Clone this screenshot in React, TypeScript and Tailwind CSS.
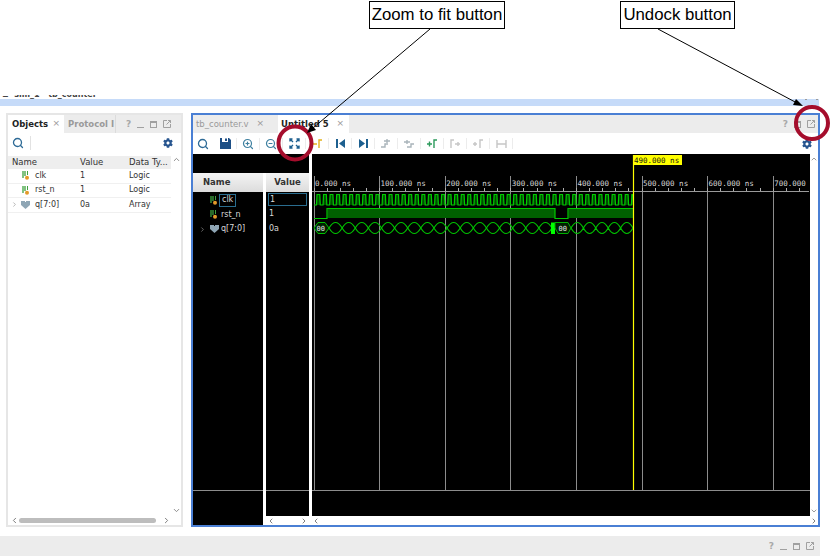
import { Search, ZoomIn, ZoomOut, ChevronLeft, ChevronRight, ChevronUp, ChevronDown } from "lucide-react"
import { FaCog } from "react-icons/fa"

const UI = "font-['DejaVu_Sans',sans-serif]"

const objects = [
  { name: "clk", value: "1", type: "Logic" },
  { name: "rst_n", value: "1", type: "Logic" },
  { name: "q[7:0]", value: "0a", type: "Array", bus: true },
]

const SignalIcon = () => (
  <svg width="8" height="9" viewBox="0 0 8 9" className="shrink-0">
    <path d="M1 0v7M3 0v5" stroke="#3fa23f" strokeWidth="1.300" />
    <path d="M5.500 0v4" stroke="#3fa23f" strokeWidth="1" />
    <circle cx="5" cy="6.800" r="2" fill="#e39a2a" />
  </svg>
)

const BusIcon = () => (
  <svg width="9" height="8" viewBox="0 0 9 8" className="shrink-0">
    <path d="M0 0h4v1h1V0h4v4L4.500 8 0 4z" fill="#8fa6b5" />
  </svg>
)

const QuestionMark = () => <span className={`${UI} text-[9px] font-bold leading-none text-[#a8a8a8]`}>?</span>

const WindowButtons = ({ gap, noMinimize }: { gap: string; noMinimize?: boolean }) => (
  <div className={`flex items-center ${gap}`}>
    <QuestionMark />
    {!noMinimize && <span className="mt-[6px] h-px w-[7px] bg-[#a0a0a0]" />}
    <span className="h-[7px] w-[7px] border border-[#a0a0a0] border-t-2" />
    <svg width="8" height="8" viewBox="0 0 8 8" fill="none" stroke="#a0a0a0">
      <path d="M4 .5H.5v7h7V4" />
      <path d="M3.500 4.500 7.500.5M5 .5h2.500V3" />
    </svg>
  </div>
)

const Divider = () => <span className="h-[14px] w-px bg-[#e2e2e2]" />

const ToolIcon = ({ d, color, fill }: { d: string; color: string; fill?: boolean }) => (
  <svg width="11" height="11" viewBox="0 0 11 11" fill={fill ? color : "none"} stroke={fill ? "none" : color} strokeWidth="1.400">
    <path d={d} />
  </svg>
)

const toolbar = [
  <Search key="find" size={12} strokeWidth={2.6} color="#2d6a96" />,
  <ToolIcon key="save" fill color="#1d4f86" d="M0 0h2v4h6V0h1l2 2v9H0zM5 .5h2V3H5z" />,
  <ZoomIn key="in" size={12} strokeWidth={2.4} color="#3d7f9f" />,
  <ZoomOut key="out" size={12} strokeWidth={2.4} color="#3d7f9f" />,
  <ToolIcon key="fit" color="#1d5f8f" d="M1 1l3 3M1 3.500V1h2.500M10 1 7 4M10 3.500V1H7.500M1 10l3-3M1 7.500V10h2.500M10 10 7 7M10 7.500V10H7.500" />,
  <ToolIcon key="cursor" color="#e3b21c" d="M0 6h5M7 10V2h3" />,
  <ToolIcon key="first" fill color="#1d5f8f" d="M1 1h2v9H1zM10 1v9L4 5.500z" />,
  <ToolIcon key="last" fill color="#1d5f8f" d="M8 1h2v9H8zM1 1v9l6-4.500z" />,
  <ToolIcon key="prev" color="#a9b4ba" d="M0 9h4V6h3M3 3h6M6 1v4" />,
  <ToolIcon key="next" color="#a9b4ba" d="M0 4h6M3 2v4M3 9h4V6h3" />,
  <ToolIcon key="marker" color="#2b9a5b" d="M0 6h5M2.500 3.500v5M7 10V2h3" />,
  <ToolIcon key="g1" color="#c6c6c6" d="M1 10V2h3M5 6h5M8 4v4" />,
  <ToolIcon key="g2" color="#c6c6c6" d="M0 6h4M2 4v4M7 10V2h3" />,
  <ToolIcon key="g3" color="#c6c6c6" d="M1 2v8M10 2v8M1 6h9" />,
]

const MAJOR = 65.6
const T0 = 313.5
const END = 633
const labels = ["0.000 ns", "100.000 ns", "200.000 ns", "300.000 ns", "400.000 ns", "500.000 ns", "600.000 ns", "700.000 ns"]

const clkPath = () => {
  let d = "M314 205"
  for (let x = 316.5; x < END; x += 6.56) {
    const fall = Math.min(x + 3.28, END)
    const rise = Math.min(x + 6.56, END)
    d += `L${x} 205L${x + 0.5} 194.500L${fall} 194.500L${fall + 0.5} 205L${rise} 205`
  }
  return d
}

// two arcs in antiphase, they cross at every value change
const busPath = (from: number, to: number) => {
  const count = Math.round((to - from) / 13.12)
  const w = (to - from) / count
  let a = `M${from} 228`
  let b = `M${from} 228`
  for (let i = 0; i < count; i++) {
    const x = from + i * w
    const up = i % 2 === 0
    a += `Q${x + w / 2} ${up ? 217 : 239} ${x + w} 228`
    b += `Q${x + w / 2} ${up ? 239 : 217} ${x + w} 228`
  }
  return `${a} ${b}`
}

const WaveSvg = () => {
  const ticks: number[] = []
  for (let x = T0; x < 810; x += MAJOR / 5) ticks.push(x)
  return (
    <svg width="498" height="362" viewBox="312 154 498 362" className="block">
      {labels.map((label, i) => {
        const x = T0 + i * MAJOR
        return (
          <g key={label}>
            <path d={`M${Math.round(x) + 0.5} 176V490`} stroke="#8c8c8c" />
            <text x={x + 1.5} y="186" fill="#d8d8d8" fontSize="7.500" fontFamily="'DejaVu Sans Mono',monospace">
              {label}
            </text>
          </g>
        )
      })}
      <path d="M312 191.500H809" stroke="#9a9a9a" />
      {ticks.map((x) => (
        <path key={x} d={`M${Math.round(x) + 0.5} 188V191`} stroke="#b0b0b0" />
      ))}
      <path d="M312 490.500H810" stroke="#8c8c8c" />
      <path d={clkPath()} fill="#004d00" stroke="#00cc00" strokeWidth="1.200" />
      <path d="M327.500 209H555V218H327.500zM568.500 209H633V218H568.500z" fill="#006000" />
      <path d="M314 218.500H327V208.500H555V218.500H568V208.500H633" fill="none" stroke="#00c800" strokeWidth="1.200" />
      <path d="M329 228L325 222.500H318L314 228L318 233.500H325z" fill="#002000" stroke="#00c000" />
      <text x="316.500" y="230.500" fill="#e8e8e8" fontSize="7" fontFamily="'DejaVu Sans Mono',monospace">
        00
      </text>
      <path d={busPath(329, 552)} fill="none" stroke="#00c000" strokeWidth="1.200" />
      <rect x="551" y="222.500" width="4" height="11.500" fill="#00ff00" />
      <path d="M555 222.500H568L571 228L568 233.500H558L555 228z" fill="#002000" stroke="#00b000" />
      <text x="558.500" y="230.500" fill="#e8e8e8" fontSize="7" fontFamily="'DejaVu Sans Mono',monospace">
        00
      </text>
      <path d={busPath(571, 633)} fill="none" stroke="#00c000" strokeWidth="1.200" />
      <path d="M633.500 155V490" stroke="#ffff00" strokeWidth="1.200" />
      <rect x="633" y="155" width="49" height="10" fill="#ffff00" />
      <text x="634" y="163" fill="#111" fontSize="7.500" fontFamily="'DejaVu Sans Mono',monospace">
        490.000 ns
      </text>
    </svg>
  )
}

const Overlay = () => (
  <svg width="831" height="556" viewBox="0 0 831 556" className="pointer-events-none absolute inset-0">
    <circle cx="295" cy="143" r="16.500" fill="none" stroke="#a50d2c" strokeWidth="4" />
    <circle cx="812" cy="123" r="16" fill="none" stroke="#a50d2c" strokeWidth="4" />
    <path d="M430 29 313 128" stroke="#000" strokeWidth="1" />
    <path d="M307 133l4-9 5 6z" fill="#000" />
    <path d="M658 29 797 103" stroke="#000" strokeWidth="1" />
    <path d="M803 106l-10-1 3-6z" fill="#000" />
  </svg>
)

const Callout = ({ text, className }: { text: string; className: string }) => (
  <div
    className={`absolute top-px flex h-[28px] items-center justify-center border border-black bg-white font-['Liberation_Sans',sans-serif] text-[16.800px] text-black ${className}`}
  >
    {text}
  </div>
)

const ObjectsPanel = () => (
  <div className={`${UI} flex h-full w-[177px] flex-col border-2 border-[#e6e6e6] bg-white text-[8px] text-[#333]`}>
    <div className="flex h-[18px] shrink-0 items-center bg-[#ececec]">
      <div className="flex h-full w-[56px] items-center justify-between bg-white pl-1 pr-[4px]">
        <span className="text-[8.500px] font-bold text-[#222]">Objects</span>
        <span className="text-[9px] text-[#999]">×</span>
      </div>
      <span className="ml-[4px] w-[47px] overflow-hidden text-[8.500px] font-bold whitespace-nowrap text-[#9a9a9a]">Protocol I</span>
      <span className="h-full w-px bg-[#dcdcdc]" />
      <div className="ml-[10px]">
        <WindowButtons gap="gap-[6px]" />
      </div>
    </div>
    <div className="flex h-[19px] shrink-0 items-center justify-between pl-[4px] pr-[8px]">
      <div className="flex items-center gap-[6px]">
        <Search size={12} strokeWidth={2.6} color="#2d6a96" />
        <Divider />
      </div>
      <FaCog size={10} color="#27558f" />
    </div>
    <div className="flex min-h-0 flex-1">
      <div className="flex-1">
        <div className="mt-[4px] grid h-[13px] grid-cols-[68px_49px_1fr] items-center bg-[#eeeeee] text-[8.500px]">
          <span className="pl-1">Name</span>
          <span className="pl-[4px]">Value</span>
          <span className="pl-[4px] whitespace-nowrap">Data Ty...</span>
        </div>
        {objects.map((o) => (
          <div key={o.name} className="grid h-[14.500px] grid-cols-[68px_49px_1fr] items-center border-b border-[#f0f0f0]">
            <span className="flex items-center gap-[3px] pl-[4px]">
              {o.bus ? <ChevronRight size={7} color="#888" className="-ml-px" /> : <span className="w-[7px]" />}
              {o.bus ? <BusIcon /> : <SignalIcon />}
              <span className="ml-[2px]">{o.name}</span>
            </span>
            <span className="pl-[4px]">{o.value}</span>
            <span className="pl-[4px]">{o.type}</span>
          </div>
        ))}
      </div>
      <div className="flex w-[10px] flex-col items-center justify-between pt-[3px] pb-[1px]">
        <ChevronUp size={9} color="#888" strokeWidth={2.500} />
        <ChevronDown size={9} color="#888" strokeWidth={2.500} />
      </div>
    </div>
    <div className="flex h-[9px] shrink-0 items-center pr-[10px]">
      <ChevronLeft size={9} color="#777" strokeWidth={2.500} className="ml-[2px]" />
      <span className="h-[5px] w-[137px] rounded-full bg-[#bdbdbd]" />
      <ChevronRight size={9} color="#777" strokeWidth={2.500} className="ml-auto" />
    </div>
  </div>
)

const SignalColumn = ({ children, title, width, align }: { children: React.ReactNode; title: string; width: string; align: string }) => (
  <div className={`flex h-full flex-col bg-black ${width}`}>
    <div className="h-[19px] shrink-0" />
    <div className={`flex h-[19px] shrink-0 items-center bg-gradient-to-b from-[#f4f4f4] to-[#dcdcdc] text-[8.500px] font-bold text-[#333] ${align}`}>
      {title}
    </div>
    <div className="h-[298px] shrink-0 pt-px text-[8px] text-[#d8d8d8]">{children}</div>
    <div className="flex-1 border-t border-[#8c8c8c]" />
  </div>
)

const WaveformPanel = () => (
  <div className={`${UI} flex h-full w-[629px] flex-col border-2 border-[#4a7fd4] bg-white`}>
    <div className="flex h-[18px] shrink-0 items-center bg-[#ececec] pr-[3px] text-[8.500px] font-bold">
      <div className="flex h-full w-[85px] items-center justify-between pl-[3px] pr-[14px]">
        <span className="font-normal text-[#9a9a9a]">tb_counter.v</span>
        <span className="text-[9px] font-normal text-[#999]">×</span>
      </div>
      <div className="flex h-full w-[71px] items-center justify-between bg-white pl-[3px] pr-[5px]">
        <span className="text-[#222]">Untitled 5</span>
        <span className="text-[9px] font-normal text-[#999]">×</span>
      </div>
      <div className="ml-auto">
        <WindowButtons gap="gap-[6px]" noMinimize />
      </div>
    </div>
    <div className="flex h-[21px] shrink-0 items-center justify-between pl-[4px] pr-[6px]">
      <div className="flex items-center">
        {toolbar.map((icon, i) => (
          <div key={i} className="flex w-[23px] justify-center border-r border-[#ececec] first:w-[12px] first:justify-start first:border-0 first:mr-[5px]">
            {icon}
          </div>
        ))}
      </div>
      <FaCog size={10} color="#27558f" />
    </div>
    <div className="flex min-h-0 flex-1">
      <div className="w-[70px]">
        <SignalColumn title="Name" width="w-full" align="pl-[10px]">
          <div className="flex h-[14px] items-center pl-[17px]">
            <SignalIcon />
            <span className="ml-[1px] flex h-[13px] items-center border border-[#2a6d8f] px-[2px]">clk</span>
          </div>
          <div className="flex h-[15px] items-center pl-[17px]">
            <SignalIcon />
            <span className="ml-[3px]">rst_n</span>
          </div>
          <div className="flex h-[14px] items-center pl-[6px]">
            <ChevronRight size={7} color="#aaa" />
            <span className="ml-[4px]">
              <BusIcon />
            </span>
            <span className="ml-[2px]">q[7:0]</span>
          </div>
        </SignalColumn>
      </div>
      <div className="w-[3px]">
        <div className="h-[19px] bg-black" />
      </div>
      <div className="flex w-[43px] flex-col">
        <div className="h-[362px] shrink-0">
          <SignalColumn title="Value" width="w-full" align="justify-center">
            <div className="mx-[2px] flex h-[13px] items-center border border-[#2a6d8f] pl-px">1</div>
            <div className="flex h-[15px] items-center pl-[3px]">1</div>
            <div className="flex h-[15px] items-center pl-[3px]">0a</div>
          </SignalColumn>
        </div>
        <div className="flex flex-1 items-center justify-between px-px">
          <ChevronLeft size={8} color="#666" strokeWidth={2.500} />
          <ChevronRight size={8} color="#666" strokeWidth={2.500} />
        </div>
      </div>
      <div className="ml-[3px] flex w-[498px] flex-col">
        <div className="h-[362px] shrink-0 bg-black">
          <WaveSvg />
        </div>
        <div className="flex flex-1 items-center">
          <ChevronLeft size={8} color="#666" strokeWidth={2.500} />
        </div>
      </div>
      <div className="flex w-[8px] flex-col items-center justify-between pt-[1px]">
        <ChevronUp size={8} color="#888" strokeWidth={2.500} />
        <div className="flex flex-col items-center">
          <ChevronDown size={8} color="#888" strokeWidth={2.500} className="mb-[2px]" />
          <ChevronRight size={8} color="#666" strokeWidth={2.500} />
        </div>
      </div>
    </div>
  </div>
)

export default function App() {
  return (
    <div className="relative h-[556px] w-[831px] overflow-hidden bg-white">
      <Callout text="Zoom to fit button" className="left-[369px] w-[136px]" />
      <Callout text="Undock button" className="left-[620px] w-[115px]" />

      <div className="h-[95px]" />
      <div className={`${UI} flex h-[4px] w-[819px] justify-between overflow-hidden pl-[2px] pr-[2px] text-[8px] font-bold leading-[8px] text-[#444]`}>
        <div className="-mt-[4px] whitespace-pre">≡  sim_1 · tb_counter</div>
      </div>
      <div className="flex h-[7px] w-[819px] justify-end gap-[9px] bg-[#c6dbf9] pr-[1px]">
        <span className="h-px w-[2px] bg-[#9a9a9a]" />
        <span className="h-px w-[2px] bg-[#9a9a9a]" />
      </div>

      <div className="mt-[7px] flex h-[414px] pl-[6px]">
        <ObjectsPanel />
        <div className="ml-[8px]">
          <WaveformPanel />
        </div>
      </div>

      <div className="mt-[9px] flex h-[20px] w-[820px] items-center justify-end bg-[#ececec] pr-[6px]">
        <WindowButtons gap="gap-[6px]" />
      </div>

      <Overlay />
    </div>
  )
}
